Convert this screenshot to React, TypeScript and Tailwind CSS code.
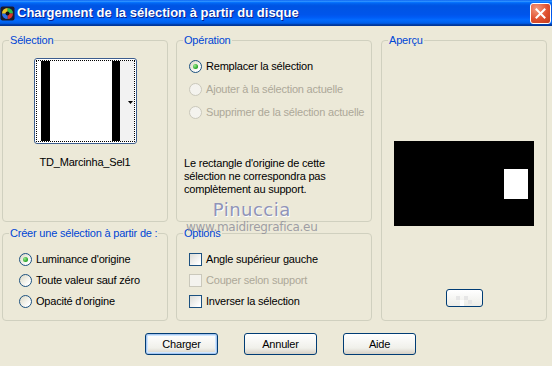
import React from 'react';
import clsx from 'clsx';

const Radio = ({ checked = false, disabled = false }: { checked?: boolean; disabled?: boolean }) => (
  <span
    className={clsx(
      'flex w-[13px] h-[13px] shrink-0 items-center justify-center rounded-full border',
      disabled
        ? 'border-[#CAC8BB] bg-[#F4F3EE]'
        : 'border-[#1C5180] bg-[linear-gradient(135deg,#DCD9C5,#FFFFFF_80%)]'
    )}
  >
    {checked && (
      <span className="w-[5px] h-[5px] rounded-full bg-[radial-gradient(circle_at_35%_35%,#9BEA8F,#21A121_70%)]" />
    )}
  </span>
);

const Checkbox = ({ disabled = false }: { disabled?: boolean }) => (
  <span
    className={clsx(
      'block w-[13px] h-[13px] shrink-0 border',
      disabled
        ? 'border-[#CAC8BB] bg-[#F4F3EE]'
        : 'border-[#1C5180] bg-[linear-gradient(135deg,#DCDCD7,#FFFFFF_85%)]'
    )}
  />
);

const Option = ({
  control,
  label,
  disabled = false,
}: {
  control: React.ReactNode;
  label: string;
  disabled?: boolean;
}) => (
  <div className="flex h-[13px] items-center gap-[4px]">
    {control}
    <span className={clsx('leading-[13px] whitespace-nowrap', disabled ? 'text-[#ACA899]' : 'text-black')}>
      {label}
    </span>
  </div>
);

const Group = ({
  title,
  className,
  children,
}: {
  title: string;
  className?: string;
  children: React.ReactNode;
}) => (
  <fieldset className={clsx('min-w-0 rounded-[4px] border border-[#D0D0BF]', className)}>
    <legend className="ml-[6px] px-[1px] text-[11px] leading-[13px] text-[#0046D5]">{title}</legend>
    {children}
  </fieldset>
);

const XpButton = ({ label, isDefault = false }: { label: string; isDefault?: boolean }) => (
  <button
    className={clsx(
      'h-[22px] w-[73px] rounded-[3px] border border-[#003C74] bg-[linear-gradient(to_bottom,#FFFFFF,#F0F0EA_70%,#D6D0C5)] text-[11px] text-black',
      isDefault && 'shadow-[inset_0_0_0_1px_#A8C6F0,inset_0_0_0_2px_#CEE7FF]'
    )}
  >
    {label}
  </button>
);

export default function App() {
  return (
    <div className="relative flex h-[366px] w-[552px] flex-col overflow-hidden bg-[#ECE9D8] font-['Liberation_Sans',Arial,sans-serif] text-[11px] tracking-[-0.2px] text-black">
      {/* Title bar */}
      <div className="flex h-[26px] shrink-0 items-center bg-[linear-gradient(to_bottom,#0058EE_0%,#3593FF_4%,#288EFF_6%,#127DFF_8%,#036FFC_10%,#0262EE_14%,#0057E5_20%,#0054E3_24%,#0055EB_56%,#005BF5_66%,#026AFE_76%,#0062EF_86%,#0052D6_92%,#0040AB_94%,#003092_100%)]">
        <svg width="15" height="15" viewBox="0 0 15 15" className="ml-[0px] mt-[1px]">
          <rect x="0.5" y="0.5" width="14" height="14" rx="2" fill="#1b1b2a" />
          <circle cx="7.5" cy="7.5" r="5.5" fill="#2a2a3a" />
          <path d="M7.5 7.5 L7.5 2 A5.5 5.5 0 0 1 13 7.5 Z" fill="#2fbf4a" />
          <path d="M7.5 7.5 L13 7.5 A5.5 5.5 0 0 1 7.5 13 Z" fill="#d9342b" />
          <path d="M7.5 7.5 L7.5 13 A5.5 5.5 0 0 1 2 7.5 Z" fill="#2c6ee8" />
          <path d="M7.5 7.5 L2 7.5 A5.5 5.5 0 0 1 7.5 2 Z" fill="#e9c52a" />
          <circle cx="7.5" cy="7.5" r="2" fill="#111" />
        </svg>
        <span className="ml-[2px] text-[13px] font-bold tracking-[0px] text-white [text-shadow:1px_1px_0_#0A1F8A]">
          Chargement de la sélection à partir du disque
        </span>
        <div className="ml-auto mr-[1px] flex h-[21px] w-[21px] items-center justify-center rounded-[3px] border border-white bg-[radial-gradient(circle_at_30%_25%,#F39A7E,#E0502F_55%,#C13C1D)]">
          <svg width="11" height="11" viewBox="0 0 11 11">
            <path d="M1.5 1.5 L9.5 9.5 M9.5 1.5 L1.5 9.5" stroke="white" strokeWidth="2" strokeLinecap="square" />
          </svg>
        </div>
      </div>

      {/* Body */}
      <div className="flex flex-col px-[2px] pt-[8px]">
        <div className="grid grid-cols-[166px_196px_167px] grid-rows-[188px_94px] gap-x-[8px] gap-y-[5px]">
          <Group title="Sélection">
            <div className="flex flex-col items-center">
              <div className="mt-[11px] flex h-[86px] w-[103px] rounded-[3px] border border-[#3C5D8E] bg-white p-[1px]">
                <div className="relative flex flex-1 border border-dotted border-black">
                  <div className="ml-[4px] w-[9px] bg-black" />
                  <div className="w-[62px] bg-white" />
                  <div className="w-[8px] bg-black" />
                  <div className="flex-1 bg-[#F2F2F2]" />
                  <svg width="5" height="3" viewBox="0 0 5 3" className="absolute right-[1px] top-[40px]">
                    <path d="M0 0 H5 L2.5 3 Z" fill="black" />
                  </svg>
                </div>
              </div>
              <span className="mt-[12px] leading-[13px]">TD_Marcinha_Sel1</span>
            </div>
          </Group>

          <Group title="Opération">
            <div className="flex flex-col gap-[10px] pl-[12px] pt-[13px]">
              <Option control={<Radio checked />} label="Remplacer la sélection" />
              <Option control={<Radio disabled />} label="Ajouter à la sélection actuelle" disabled />
              <Option control={<Radio disabled />} label="Supprimer de la sélection actuelle" disabled />
            </div>
            <p className="ml-[7px] mt-[38px] leading-[13px]">
              Le rectangle d'origine de cette
              <br />
              sélection ne correspondra pas
              <br />
              complètement au support.
            </p>
          </Group>

          <Group title="Aperçu" className="row-span-2 ml-[1px]">
            <div className="flex flex-col items-center">
              <div className="relative mt-[94px] h-[85px] w-[140px] bg-black">
                <div className="absolute left-[110px] top-[28px] h-[30px] w-[24px] bg-white" />
              </div>
              <button className="mt-[63px] flex h-[18px] w-[37px] items-end justify-center overflow-hidden rounded-[3px] border border-[#003C74] bg-[linear-gradient(to_bottom,#FFFFFF,#EDEDE7)]">
                <svg width="16" height="10" viewBox="0 0 16 10">
                  <rect x="0" y="0" width="4" height="4" fill="#E6E6E6" />
                  <rect x="8" y="0" width="4" height="4" fill="#E6E6E6" />
                  <rect x="4" y="4" width="4" height="4" fill="#E6E6E6" />
                  <rect x="12" y="4" width="4" height="4" fill="#E6E6E6" />
                  <rect x="4" y="4" width="4" height="6" fill="#FFFFFF" />
                </svg>
              </button>
            </div>
          </Group>

          <Group title="Créer une sélection à partir de :">
            <div className="flex flex-col gap-[8px] pl-[16px] pt-[13px]">
              <Option control={<Radio checked />} label="Luminance d'origine" />
              <Option control={<Radio />} label="Toute valeur sauf zéro" />
              <Option control={<Radio />} label="Opacité d'origine" />
            </div>
          </Group>

          <Group title="Options">
            <div className="flex flex-col gap-[8px] pl-[12px] pt-[13px]">
              <Option control={<Checkbox />} label="Angle supérieur gauche" />
              <Option control={<Checkbox disabled />} label="Couper selon support" disabled />
              <Option control={<Checkbox />} label="Inverser la sélection" />
            </div>
          </Group>
        </div>

        <div className="mt-[12px] flex gap-[26px] pl-[143px]">
          <XpButton label="Charger" isDefault />
          <XpButton label="Annuler" />
          <XpButton label="Aide" />
        </div>
      </div>

      {/* Watermark */}
      <div className="pointer-events-none absolute left-[186px] top-[199px] flex flex-col items-center">
        <span className="font-['DejaVu_Sans',sans-serif] text-[18px] leading-[22px] tracking-[0.5px] text-[#9094B8] [text-shadow:1px_1px_0_#FFFFFF]">
          Pinuccia
        </span>
        <span className="font-['DejaVu_Sans',sans-serif] text-[12px] leading-[12px] tracking-[-0.3px] text-[#8A8A96]/80">
          www.maidiregrafica.eu
        </span>
      </div>
    </div>
  );
}
